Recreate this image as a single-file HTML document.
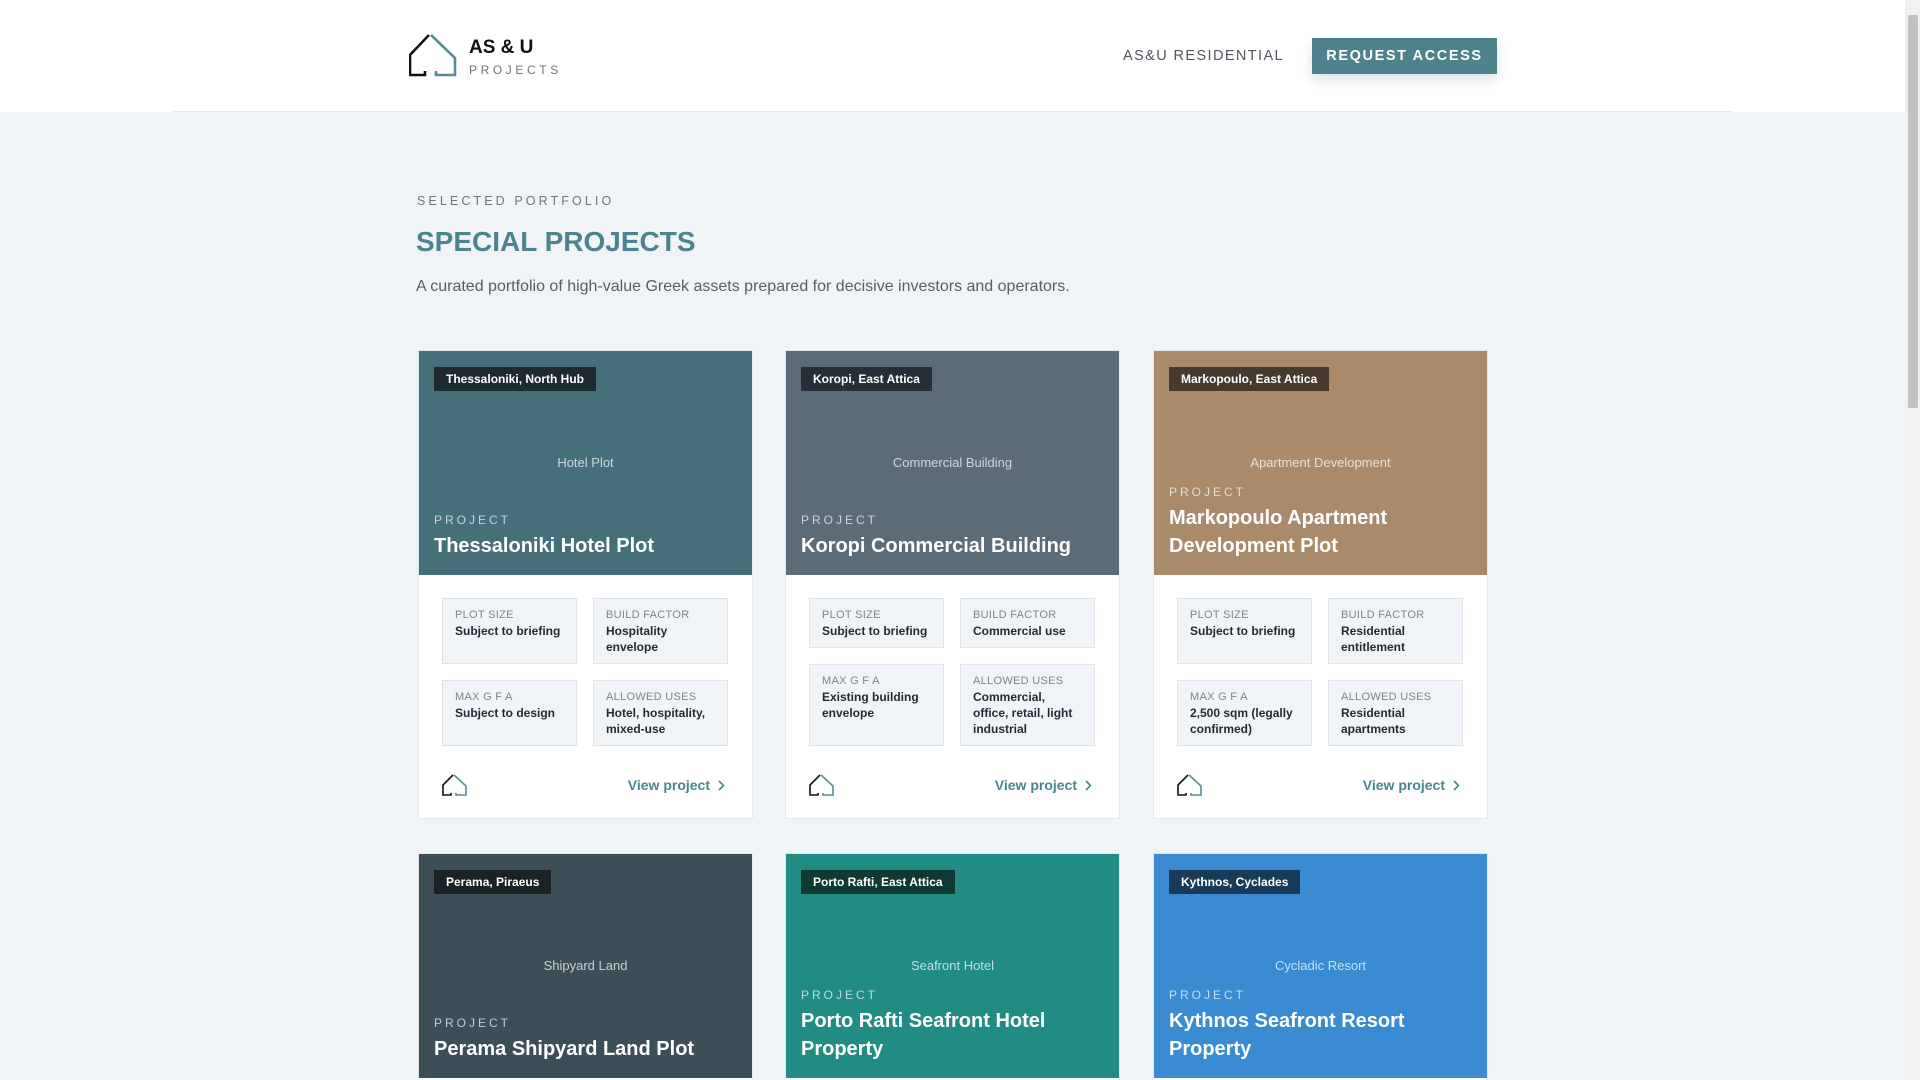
<!DOCTYPE html>
<html><head><meta charset="utf-8"><style>
*{box-sizing:border-box;margin:0;padding:0}
html,body{width:1920px;height:1080px;overflow:hidden;background:#f0f4f7;font-family:"Liberation Sans",Arial,sans-serif}
#wrap{position:relative;width:1920px;height:1080px;overflow:hidden}
.header{position:absolute;left:0;top:0;width:1905px;height:112px;background:#fff}
.hline{position:absolute;left:173px;top:111px;width:1559px;height:1px;background:#e3e8ec}
.logo{position:absolute;left:409px;top:34px}
.brand{position:absolute;left:469px;top:37px;font-weight:bold;font-size:19px;color:#111}
.brand2{position:absolute;left:469px;top:63px;font-size:12px;letter-spacing:3.6px;color:#6b7480}
.nav{position:absolute;left:1123px;top:48px;font-size:14.5px;letter-spacing:1.4px;color:#4e5660}
.btn{position:absolute;left:1312px;top:38px;width:185px;height:36px;background:#4f828c;color:#fff;font-weight:bold;font-size:14.5px;letter-spacing:1.6px;text-align:center;line-height:36px;box-shadow:0 6px 12px rgba(0,0,0,.12)}
.eyebrow{position:absolute;left:417px;top:194px;font-size:12.5px;letter-spacing:3.1px;color:#6b7480}
h1{position:absolute;left:416px;top:226px;font-size:28px;font-weight:bold;color:#4a8491}
.desc{position:absolute;left:416px;top:278px;font-size:16px;color:#555e68}
.card{position:absolute;width:335px;height:469px;background:#fff;border:1px solid #e3e8ec}
.img{position:absolute;left:0;top:0;width:100%;height:224px}
.tag{position:absolute;left:15px;top:16px;height:24px;line-height:24px;padding:0 12px;font-size:12px;font-weight:bold;color:#fff}
.mid{position:absolute;left:0;right:0;top:104px;text-align:center;font-size:13px;color:rgba(255,255,255,.72)}
.tb{position:absolute;left:15px;right:16px;bottom:15px;color:#fff}
.pl{font-size:12px;letter-spacing:3px;color:rgba(255,255,255,.7);margin-bottom:5px}
.tt{font-size:20px;font-weight:bold;line-height:28px}
.stats{position:absolute;left:23px;top:247px;width:286px;display:grid;grid-template-columns:135px 135px;column-gap:16px;row-gap:16px}
.st{background:#f0f4f7;border:1px solid #dde3e8;padding:10px 12px 8px}
.sl{font-size:11px;color:#7b8590;letter-spacing:.3px;margin-bottom:2px}
.sv{font-size:12px;font-weight:bold;color:#1f2a36;line-height:16px}
.foot{position:absolute;left:23px;right:27px;bottom:22px;height:22px}
.vp{position:absolute;right:0;top:3px;font-size:14px;font-weight:bold;color:#4a8491}
.vp svg{vertical-align:-1px;margin-left:8px}
.sb{position:absolute;left:1905px;top:0;width:15px;height:1080px;background:#f1f1f1}
.th{position:absolute;left:1908px;top:15px;width:10px;height:393px;background:#c1c1c1;border-radius:2px}
</style></head><body><div id="wrap">
<div class="header">
<svg class="logo" width="48" height="43" viewBox="0 0 48 43" fill="none" stroke-width="2.6">
<path d="M20 1 L1 21 V41 H16 V37" stroke="#111"/>
<path d="M22 1 L46 24 V41 H27 V37" stroke="#5a8b95"/>
</svg>
<div class="brand">AS &amp; U</div>
<div class="brand2">PROJECTS</div>
<div class="nav">AS&amp;U RESIDENTIAL</div>
<div class="btn">REQUEST ACCESS</div>
</div>
<div class="hline"></div>
<div class="eyebrow">SELECTED PORTFOLIO</div>
<h1>SPECIAL PROJECTS</h1>
<div class="desc">A curated portfolio of high-value Greek assets prepared for decisive investors and operators.</div>

<div class="card" style="left:418px;top:350px">
 <div class="img" style="background:#476f7a"><div class="tag" style="background:#1d2b31">Thessaloniki, North Hub</div><div class="mid">Hotel Plot</div>
 <div class="tb"><div class="pl">PROJECT</div><div class="tt">Thessaloniki Hotel Plot</div></div></div>
 <div class="stats">
  <div class="st"><div class="sl">PLOT SIZE</div><div class="sv">Subject to briefing</div></div>
  <div class="st"><div class="sl">BUILD FACTOR</div><div class="sv">Hospitality envelope</div></div>
  <div class="st"><div class="sl">MAX G F A</div><div class="sv">Subject to design</div></div>
  <div class="st"><div class="sl">ALLOWED USES</div><div class="sv">Hotel, hospitality, mixed-use</div></div>
 </div>
 <div class="foot"><svg width="25" height="22" viewBox="0 0 25 22" fill="none" stroke-width="1.6"><path d="M11 1 L1 11 V21 H9 V19" stroke="#111"/><path d="M12 1 L24 12 V21 H14 V19" stroke="#5a8b95"/></svg><div class="vp">View project<svg width="7" height="11" viewBox="0 0 7 11" fill="none" stroke="#4a8491" stroke-width="1.6"><path d="M1 1 L5.5 5.5 L1 10"/></svg></div></div>
</div>
<div class="card" style="left:785px;top:350px">
 <div class="img" style="background:#5c6b78"><div class="tag" style="background:#262f37">Koropi, East Attica</div><div class="mid">Commercial Building</div>
 <div class="tb"><div class="pl">PROJECT</div><div class="tt">Koropi Commercial Building</div></div></div>
 <div class="stats">
  <div class="st"><div class="sl">PLOT SIZE</div><div class="sv">Subject to briefing</div></div>
  <div class="st"><div class="sl">BUILD FACTOR</div><div class="sv">Commercial use</div></div>
  <div class="st"><div class="sl">MAX G F A</div><div class="sv">Existing building envelope</div></div>
  <div class="st"><div class="sl">ALLOWED USES</div><div class="sv">Commercial, office, retail, light industrial</div></div>
 </div>
 <div class="foot"><svg width="25" height="22" viewBox="0 0 25 22" fill="none" stroke-width="1.6"><path d="M11 1 L1 11 V21 H9 V19" stroke="#111"/><path d="M12 1 L24 12 V21 H14 V19" stroke="#5a8b95"/></svg><div class="vp">View project<svg width="7" height="11" viewBox="0 0 7 11" fill="none" stroke="#4a8491" stroke-width="1.6"><path d="M1 1 L5.5 5.5 L1 10"/></svg></div></div>
</div>
<div class="card" style="left:1153px;top:350px">
 <div class="img" style="background:#a98b6b"><div class="tag" style="background:#463a2e">Markopoulo, East Attica</div><div class="mid">Apartment Development</div>
 <div class="tb"><div class="pl">PROJECT</div><div class="tt">Markopoulo Apartment Development Plot</div></div></div>
 <div class="stats">
  <div class="st"><div class="sl">PLOT SIZE</div><div class="sv">Subject to briefing</div></div>
  <div class="st"><div class="sl">BUILD FACTOR</div><div class="sv">Residential entitlement</div></div>
  <div class="st"><div class="sl">MAX G F A</div><div class="sv">2,500 sqm (legally confirmed)</div></div>
  <div class="st"><div class="sl">ALLOWED USES</div><div class="sv">Residential apartments</div></div>
 </div>
 <div class="foot"><svg width="25" height="22" viewBox="0 0 25 22" fill="none" stroke-width="1.6"><path d="M11 1 L1 11 V21 H9 V19" stroke="#111"/><path d="M12 1 L24 12 V21 H14 V19" stroke="#5a8b95"/></svg><div class="vp">View project<svg width="7" height="11" viewBox="0 0 7 11" fill="none" stroke="#4a8491" stroke-width="1.6"><path d="M1 1 L5.5 5.5 L1 10"/></svg></div></div>
</div>

<div class="card" style="left:418px;top:853px;height:227px;border-bottom:0">
 <div class="img" style="background:#3d4f56"><div class="tag" style="background:#1a2226">Perama, Piraeus</div><div class="mid">Shipyard Land</div>
 <div class="tb"><div class="pl">PROJECT</div><div class="tt">Perama Shipyard Land Plot</div></div></div>
</div>
<div class="card" style="left:785px;top:853px;height:227px;border-bottom:0">
 <div class="img" style="background:#218c82"><div class="tag" style="background:#0e3a33">Porto Rafti, East Attica</div><div class="mid">Seafront Hotel</div>
 <div class="tb"><div class="pl">PROJECT</div><div class="tt">Porto Rafti Seafront Hotel Property</div></div></div>
</div>
<div class="card" style="left:1153px;top:853px;height:227px;border-bottom:0">
 <div class="img" style="background:#3a8bd1"><div class="tag" style="background:#1a3a5a">Kythnos, Cyclades</div><div class="mid">Cycladic Resort</div>
 <div class="tb"><div class="pl">PROJECT</div><div class="tt">Kythnos Seafront Resort Property</div></div></div>
</div>

<div class="sb"></div><div class="th"></div>
</div></body></html>
